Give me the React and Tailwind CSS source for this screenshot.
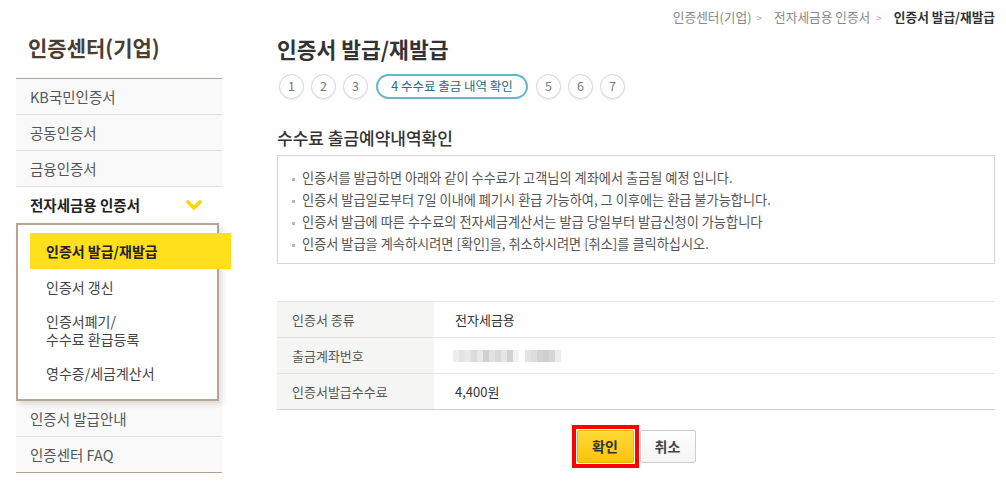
import React from "react";

const menu = ["KB국민인증서", "공동인증서", "금융인증서"];
const subMenu = [["인증서 갱신"], ["인증서폐기/", "수수료 환급등록"], ["영수증/세금계산서"]];
const steps = ["1", "2", "3", "4", "5", "6", "7"];
const notices = [
  "인증서를 발급하면 아래와 같이 수수료가 고객님의 계좌에서 출금될 예정 입니다.",
  "인증서 발급일로부터 7일 이내에 폐기시 환급 가능하여, 그 이후에는 환급 불가능합니다.",
  "인증서 발급에 따른 수수료의 전자세금계산서는 발급 당일부터 발급신청이 가능합니다",
  "인증서 발급을 계속하시려면 [확인]을, 취소하시려면 [취소]를 클릭하십시오.",
];
// masked account number, drawn as blurred grey patches
const masked = [
  "bg-[#eeeeee]", "bg-[#e4e4e4]", "bg-[#ebe6e6]", "bg-[#dcdcdc]", "bg-[#e8e8e8]",
  "bg-[#cfcfcf]", "bg-[#e2e2e2]", "bg-[#d9d9dc]", "bg-[#e6e6e6]", "bg-[#d2d2d4]",
  "bg-[#f2f2f2]", "bg-[#ffffff]", "bg-[#e3e3e3]", "bg-[#dedede]", "bg-[#d6d2d2]",
  "bg-[#cfcfcf]", "bg-[#d5d5d5]", "bg-[#ececec]",
];

function Sidebar() {
  return (
    <aside className="w-[206px] shrink-0 pt-[33px]">
      <h1 className="pl-3 mb-[17px] text-[21px] leading-[28px] font-bold text-[#4a3d31]">
        인증센터(기업)
      </h1>
      <ul className="border-t border-[#b5a18b] text-[14.5px] text-[#555]">
        {menu.map((m) => (
          <li
            key={m}
            className="h-[36px] flex items-center pl-[14px] bg-[#f9f9f9] border-b border-[#e0e0e0]"
          >
            {m}
          </li>
        ))}
        <li className="h-[36px] flex items-center justify-between pl-[14px] pr-[20px] bg-white font-bold text-[#222]">
          전자세금용 인증서
          <svg width="16" height="11" viewBox="0 0 16 11">
            <polyline
              points="2,2 8,8 14,2"
              fill="none"
              stroke="#ffd500"
              strokeWidth="3.6"
              strokeLinecap="square"
            />
          </svg>
        </li>
        <li className="relative z-10 w-[203px] border-2 border-[#b9a58f] bg-white py-2 shadow-[3px_3px_6px_rgba(0,0,0,0.13)] text-[14px] text-[#444]">
          <div className="ml-3 w-[201px] h-9 bg-[#ffe01b] pl-4 flex items-center font-bold text-[#222]">
            인증서 발급/재발급
          </div>
          {subMenu.map((lines) => (
            <div
              key={lines[0]}
              className={`pl-7 ${lines.length > 1 ? "py-[7px] leading-[18px]" : "py-2 leading-[20px]"}`}
            >
              {lines.map((l) => (
                <div key={l}>{l}</div>
              ))}
            </div>
          ))}
        </li>
        <li className="h-[36px] flex items-center pl-[14px] bg-[#f9f9f9] border-b border-[#e0e0e0]">
          인증서 발급안내
        </li>
        <li className="h-[36px] flex items-center pl-[14px] bg-[#f9f9f9] border-b border-[#b5a18b]">
          인증센터 FAQ
        </li>
      </ul>
    </aside>
  );
}

function Steps() {
  return (
    <div className="flex items-center gap-[7px] mt-[11px] ml-[2px]">
      {steps.map((s) =>
        s === "4" ? (
          <div
            key={s}
            className="mx-[1px] w-[152px] h-[25px] rounded-full border-2 border-[#66b7cb] flex items-center justify-center text-[12.5px] text-[#2c6b85]"
          >
            4 수수료 출금 내역 확인
          </div>
        ) : (
          <div
            key={s}
            className="w-[25px] h-[25px] rounded-full border border-[#d5d5d5] shadow-[0_1px_1px_rgba(0,0,0,0.08)] flex items-center justify-center text-[12.5px] text-[#777]"
          >
            {s}
          </div>
        )
      )}
    </div>
  );
}

function Row({ label, children }) {
  return (
    <div className="flex h-[36px] border-t border-[#e3e3e3]">
      <div className="w-[157px] bg-[#f5f5f3] pl-[15px] flex items-center text-[#555]">{label}</div>
      <div className="pl-[21px] flex items-center text-[#333]">{children}</div>
    </div>
  );
}

export default function App() {
  return (
    <div className="w-[1006px] h-[493px] bg-white flex pl-4 font-['Noto_Sans_CJK_KR',sans-serif] overflow-hidden">
      <Sidebar />
      <main className="ml-[55px] w-[718px]">
        <nav className="h-[34px] flex items-center justify-end text-[12.7px] text-[#888]">
          <span>인증센터(기업)</span>
          <span className="ml-[5px] mr-[12px] text-[10px] text-[#aaa]">&gt;</span>
          <span>전자세금용 인증서</span>
          <span className="ml-[6px] mr-[12px] text-[10px] text-[#aaa]">&gt;</span>
          <span className="font-bold text-[#333]">인증서 발급/재발급</span>
        </nav>
        <h2 className="mt-[1px] text-[21.5px] leading-[28px] font-bold text-[#333]">인증서 발급/재발급</h2>
        <Steps />
        <h3 className="mt-[27px] text-[17px] leading-[24px] font-medium text-[#333]">
          수수료 출금예약내역확인
        </h3>
        <ul className="mt-[5px] border border-[#d6d6d6] pt-[11px] pb-2 pl-[14px] text-[13.2px] leading-[22px] text-[#555]">
          {notices.map((n) => (
            <li key={n} className="flex items-center">
              <span className="w-[3px] h-[3px] bg-[#b8b8b8] mr-[7px] mt-[2px]"></span>
              {n}
            </li>
          ))}
        </ul>
        <div className="mt-[37px] text-[13px] border-b border-[#cfcfcf]">
          <Row label="인증서 종류">전자세금용</Row>
          <Row label="출금계좌번호">
            <div className="flex blur-[0.6px] -ml-[2px]">
              {masked.map((c, i) => (
                <div key={i} className={`w-[6px] h-[12px] ${c}`}></div>
              ))}
            </div>
          </Row>
          <Row label="인증서발급수수료">4,400원</Row>
        </div>
        <div className="mt-[15px] flex justify-center pr-[5px]">
          <div className="border-4 border-[#ff0000] p-[1px]">
            <button className="w-[57px] h-[33px] rounded-[2px] border border-[#e9b600] bg-gradient-to-b from-[#ffd934] to-[#ffc400] text-[14px] font-bold text-[#333]">
              확인
            </button>
          </div>
          <button className="ml-[1px] mt-[5px] w-[56px] h-[33px] rounded-[2px] border border-[#cccccc] bg-gradient-to-b from-white to-[#f4f4f4] text-[14px] font-bold text-[#444]">
            취소
          </button>
        </div>
      </main>
    </div>
  );
}
